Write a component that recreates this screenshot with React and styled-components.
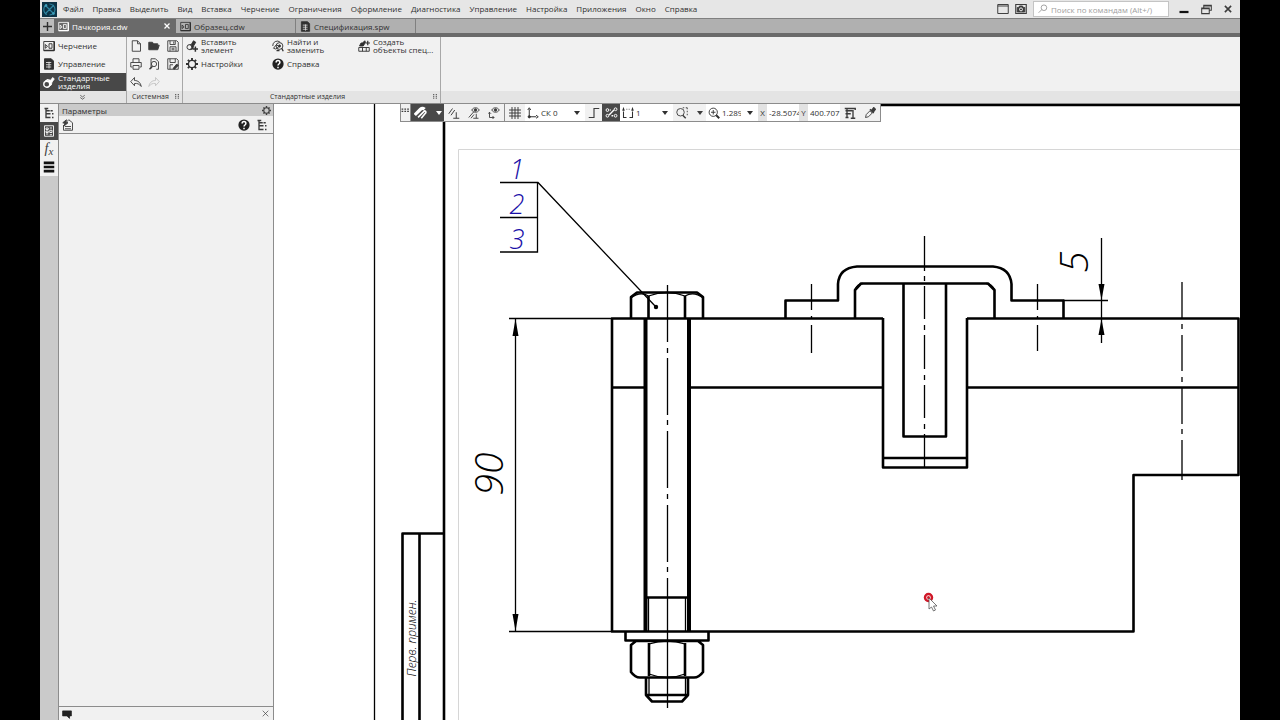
import React, { useState } from 'react'
import styled, { createGlobalStyle } from 'styled-components'

const GlobalStyle = createGlobalStyle`
    * {
        box-sizing: border-box;
    }
    body {
        margin: 0;
        background: #000;
        font-family: "Open Sans", "Noto Sans", sans-serif;
        font-size: 8px;
        color: #303030;
    }
    button, input, select {
        font: inherit;
        color: inherit;
        border: 0;
        padding: 0;
        margin: 0;
        background: none;
        border-radius: 0;
        outline: none;
    }
`

const Window = styled.div`
    display: flex;
    flex-direction: column;
    height: 100vh;
    margin: 0 40px;
    background: #f1f1f1;
    overflow: hidden;
`

const MenuBar = styled.header`
    display: flex;
    align-items: center;
    flex: none;
    height: 19px;
    padding: 0 6px 0 2px;
    background: #e6e6e6;
    border-bottom: 1px solid #808080;
`

const Menu = styled.nav`
    display: flex;
    flex: 1;
    gap: 9px;
    margin-left: 6px;
`

const MenuItem = styled.button`
    line-height: 18px;
    white-space: nowrap;
`

const WindowTools = styled.div`
    display: flex;
    align-items: center;
    gap: 6px;
`

const Search = styled.label`
    display: flex;
    align-items: center;
    gap: 3px;
    width: 136px;
    height: 16px;
    padding: 0 4px;
    background: #fff;
    border: 1px solid #c4c4c4;
    color: #888;
`

const SearchInput = styled.input`
    flex: 1;
    min-width: 0;
    &::placeholder {
        color: #a0a0a0;
        opacity: 1;
    }
`

const WindowButtons = styled.div`
    display: flex;
    gap: 10px;
    margin-left: 3px;
`

const IconButton = styled.button`
    display: flex;
    align-items: center;
    justify-content: center;
    flex: none;
    width: ${(props) => props.$width || 12}px;
    height: ${(props) => props.$height || 12}px;
    color: ${(props) => (props.$active ? '#fff' : '#3c3c3c')};
    background: ${(props) => (props.$active ? '#484848' : 'transparent')};
    opacity: ${(props) => (props.disabled ? 0.25 : 1)};
`

const TabBar = styled.div`
    display: flex;
    flex: none;
    height: 18px;
    background: #b0b0b0;
    border-bottom: 4px solid #6a6a6a;
`

const NewTab = styled.button`
    display: flex;
    align-items: center;
    justify-content: center;
    width: 14px;
    height: 14px;
    background: #bcbcbc;
`

const Tab = styled.button`
    display: flex;
    align-items: center;
    gap: 3px;
    width: ${(props) => (props.$active ? 122 : 120)}px;
    height: 14px;
    padding: 0 4px;
    color: ${(props) => (props.$active ? '#fff' : '#303030')};
    background: ${(props) => (props.$active ? '#6a6a6a' : '#b0b0b0')};
    border-right: 1px solid ${(props) => (props.$active ? '#6a6a6a' : '#808080')};
    text-align: left;
`

const TabTitle = styled.span`
    flex: 1;
`

const Ribbon = styled.div`
    display: flex;
    flex: none;
    height: 67px;
    background: #f1f1f1;
    border-bottom: 1px solid #8c8c8c;
`

const Group = styled.section`
    display: flex;
    flex-direction: column;
    flex: ${(props) => (props.$width ? 'none' : 1)};
    width: ${(props) => (props.$width ? props.$width + 'px' : 'auto')};
    border-right: ${(props) => (props.$width ? '1px solid #a8a8a8' : '0')};
`

const GroupBody = styled.div`
    display: grid;
    flex: 1;
    grid-template-columns: ${(props) => props.$columns || '1fr'};
    grid-auto-rows: 18px;
    padding: 0 ${(props) => props.$pad || 0}px;
    justify-items: ${(props) => (props.$center ? 'center' : 'stretch')};
    align-items: center;
`

const GroupFooter = styled.footer`
    display: flex;
    align-items: center;
    justify-content: center;
    height: 12px;
    padding-right: 2px;
    background: #e4e4e4;
    font-size: 7px;
    line-height: 12px;
`

const GroupTitle = styled.span`
    flex: 1;
    text-align: center;
`

const Command = styled.button`
    display: flex;
    align-items: center;
    gap: 3px;
    height: 18px;
    padding-left: ${(props) => props.$pad || 0}px;
    line-height: 8px;
    text-align: left;
    white-space: pre;
    color: ${(props) => (props.$active ? '#fff' : '#303030')};
    background: ${(props) => (props.$active ? '#484848' : 'transparent')};
`

const Workspace = styled.main`
    display: flex;
    flex: 1;
    min-height: 0;
`

const SideStrip = styled.div`
    display: flex;
    flex-direction: column;
    flex: none;
    width: 19px;
    background: #cacaca;
    border-right: 1px solid #8c8c8c;
`

const SideButton = styled(IconButton)`
    width: 18px;
    height: 18px;
    background: ${(props) => (props.$active ? '#484848' : '#f1f1f1')};
`

const Panel = styled.aside`
    display: flex;
    flex-direction: column;
    flex: none;
    width: 215px;
    border-right: 1px solid #8c8c8c;
`

const PanelHeader = styled.div`
    display: flex;
    align-items: center;
    justify-content: space-between;
    height: 12px;
    padding: 0 1px 0 3px;
    line-height: 11px;
    background: #cacaca;
`

const PanelTools = styled.div`
    display: flex;
    align-items: center;
    gap: 6px;
    height: 18px;
    padding: 0 5px 0 3px;
    border-bottom: 1px solid #8c8c8c;
`

const PanelBody = styled.div`
    flex: 1;
`

const PanelFooter = styled.div`
    display: flex;
    align-items: center;
    justify-content: space-between;
    height: 14px;
    padding: 0 2px;
    border-top: 1px solid #8c8c8c;
`

const Spacer = styled.span`
    flex: 1;
`

const Canvas = styled.div`
    position: relative;
    flex: 1;
    min-width: 0;
    background: #fff;
`

const Sheet = styled.svg`
    display: block;
    width: 100%;
    height: 100%;
`

const ViewBar = styled.div`
    position: absolute;
    top: 0;
    left: 126px;
    display: flex;
    height: 18px;
    background: #fff;
    border: 1px solid #8c8c8c;
    border-top: 0;
`

const Segment = styled.div`
    display: flex;
    align-items: center;
    justify-content: space-around;
    flex: none;
    width: ${(props) => props.$width}px;
    background: ${(props) => (props.$dark ? '#484848' : '#f1f1f1')};
    color: ${(props) => (props.$dark ? '#fff' : '#3c3c3c')};
    border-right: ${(props) => (props.$line ? '1px solid #8c8c8c' : '0')};
`

const Drop = styled.label`
    display: flex;
    align-items: center;
    gap: 2px;
    width: ${(props) => props.$width}px;
    padding: 0 5px 0 2px;
`

const DropSelect = styled.select`
    appearance: none;
    flex: 1;
    min-width: 0;
    overflow: hidden;
`

const Caret = styled.span`
    flex: none;
    width: 0;
    height: 0;
    margin-left: 4px;
    border: 3px solid transparent;
    border-top: 4px solid currentColor;
    border-bottom: 0;
`

const Coordinate = styled.label`
    display: flex;
    align-items: center;
    gap: 2px;
`

const Axis = styled.span`
    width: 9px;
    line-height: 17px;
    text-align: center;
    background: #e2e2e2;
`

const CoordinateInput = styled.input`
    width: 30px;
`

const glyphs = {
    sheet: <><path d="M1 2h14v12H1zM8 5v6M12 5v6M8 5h4M8 11h4M3 6l3 2.500-3 2.500z" /><path d="M1 14h14M15 2v12" strokeWidth="2" /></>,
    doc: <><path d="M2 1h9l3 3v11H2z" fill="currentColor" /><path d="M4 6h7M4 9h7M4 12h7M8 5v9" stroke="#ddd" /></>,
    bolt: <><path d="M5 7l5-1 3-4 2 2-3 4-1 4-5 3z" fill="currentColor" /><circle cx="5" cy="11" r="4" fill="#484848" strokeWidth="1.800" /><path d="M3 7l3-2 4 1" strokeWidth="2" /></>,
    file: <path d="M3 1h7l4 4v10H3zM10 1v4h4" />,
    folder: <path d="M1 13V3h5l1.500 2H13v2h2l-2 6z" fill="currentColor" />,
    save: <><path d="M1 1h12l2 2v12H1zM4 1v5h7V1M4 15V9h8v6" /><path d="M9 2v3M6 11h4M6 13h4" /></>,
    print: <path d="M4 6V1h8v5M3 12H1V6h14v6h-2M4 10h8v5H4z" />,
    preview: <><path d="M4 14V1h6l4 4v10h-3" /><circle cx="8" cy="8" r="3.500" /><path d="M6 11l-4 4" strokeWidth="2" /></>,
    saveAs: <><path d="M1 1h12l2 2v12H1zM4 1v5h7V1M4 15V9h4" /><path d="M8 14l5-6 2 2-5 5z" fill="currentColor" /></>,
    undo: <path d="M6 2L1 7.500 6 13V10c4-.5 6 .5 9 4-1-5-4-8-9-8z" />,
    redo: <path d="M10 2l5 5.500L10 13V10c-4-.5-6 .5-9 4 1-5 4-8 9-8z" />,
    insert: <><path d="M3 7l4-1 3-5 3 2-3 5-1 4-4 1z" fill="currentColor" /><circle cx="4.500" cy="9.500" r="3.200" fill="#f1f1f1" /><path d="M9 12h7M12.500 8.500v7" strokeWidth="2" /></>,
    gear: <><circle cx="8" cy="8" r="4.800" strokeWidth="1.800" /><path d="M8 0v3M8 13v3M0 8h3M13 8h3M2.500 2.500l2 2M11.500 11.500l2 2M2.500 13.500l2-2M11.500 4.500l2-2" strokeWidth="2.500" /></>,
    replace: <><path d="M1 8a6 6 0 0 1 10-5M2 11l4-5 3 3-4 3z" /><circle cx="10" cy="8" r="4.500" /><path d="M8 8h4M10 6v4M6 14h4M13 11l2 4" strokeWidth="1.700" /></>,
    help: <><circle cx="8" cy="8" r="7.500" fill="#222" stroke="none" /><path d="M5.500 6c0-3.500 5-3.500 5 0 0 2-2.500 2-2.500 4M8 11.500v2" stroke="#fff" strokeWidth="2" /></>,
    create: <><path d="M2 8l2-4 2 0 3-3 1 2-3 5H3z" fill="currentColor" /><path d="M10 4h6M13 1v6" strokeWidth="1.600" /><path d="M1 10h14v5H1zM6 10v5M11 10v5" /></>,
    tree: <path d="M4 1v13h6M2 2h5M4 5h5M4 9h6M10 5h3M12 9h2M12 14h2" strokeWidth="1.800" />,
    params: <><path d="M2 1h12v14H2z" /><path d="M4 4h3v2H4zM4 8h3v2H4zM4 12h3M9 4h3M9 7h3v3H9zM9 13h3" /></>,
    layers: <path d="M1 2.500h14M1 8h14M1 13.500h14" strokeWidth="3.500" stroke="#111" />,
    apply: <><path d="M6 4l3-3 5 4v10H2V8M4 10h8M4 13h8" /><path d="M6 1L1 5l3 1-2 4 6-5-3-1z" fill="currentColor" /></>,
    message: <path d="M1 3h14v8h-3v4l-4-4H1z" fill="#222" stroke="#222" />,
    close: <path d="M3 3l10 10M13 3L3 13" strokeWidth="2.500" />,
    thinClose: <path d="M3 3l10 10M13 3L3 13" />,
    minimize: <path d="M2 12h12" strokeWidth="3" stroke="#111" />,
    restore: <path d="M4 6V2h11v7h-3M1 6h11v8H1zM1 7h11M4 3h11" strokeWidth="1.500" />,
    screen: <path d="M1 2h14v12H1zM1 4h14" strokeWidth="1.300" />,
    camera: <><path d="M1 2h14v12H1z" strokeWidth="1.500" /><path d="M3 6h2l1-2h4l1 2h2v6H3z" fill="currentColor" /><circle cx="8" cy="8.500" r="2" stroke="#fff" /></>,
    search: <><circle cx="9.500" cy="6" r="4.500" /><path d="M6 9l-5 5" /></>,
    plus: <path d="M8 0v16M0 8h16" strokeWidth="2.500" />,
    more: <path d="M4 4l4 3 4-3M4 8l4 3 4-3" />,
    grip: <path d="M3 1h3M10 1h3M3 6h3M10 6h3M3 11h3M10 11h3" strokeWidth="2.500" />,
    dots: <path d="M1 2h3M6 2h3M11 2h3M1 6h3M6 6h3M11 6h3" strokeWidth="2" />,
    clip: <><path d="M1 11l7-7c2-2 4-1 5 0" strokeWidth="4" /><path d="M5 14l8-8c2 0 2 2 1 3l-5 6" strokeWidth="2" /></>,
    perp: <path d="M1 9l5-7M4 11l5-7M7 15h8M11 7v8" strokeWidth="1.300" />,
    eyePerp: <><path d="M1 14l7-8M4 15l4-5M7 15h7M11 9v6" /><path d="M5 4c2-4 8-4 10 0-2 4-8 4-10 0z" /><circle cx="10" cy="4" r="1.700" fill="currentColor" /></>,
    eyeAxis: <><path d="M2 7v7h6M0 9l2-2 2 2M6 12l2 2-2 2" /><path d="M5 4c2-4 8-4 10 0-2 4-8 4-10 0z" /><circle cx="10" cy="4" r="1.700" fill="currentColor" /></>,
    grid: <path d="M4 0v16M8 0v16M12 0v16M0 4h16M0 8h16M0 12h16" strokeWidth="1.300" />,
    axes: <><path d="M3 3v10h9M1 4l2-3 2 3M12 11l3 2-3 2" strokeWidth="1.300" /><circle cx="3" cy="13" r="1.500" fill="currentColor" /></>,
    step: <path d="M1 14h7V2h7" strokeWidth="1.500" />,
    snap: <><circle cx="3" cy="5" r="1.700" /><circle cx="13" cy="4" r="1.700" /><circle cx="3" cy="12" r="1.700" /><circle cx="13" cy="12" r="1.700" /><path d="M5 11l6-6M6 5h1M8 12h2" strokeWidth="1.700" /></>,
    pitch: <path d="M2 6v8h4M1 5l1-3 1 3M10 14h4V6M13 5l1-3 1 3M6 3h1M9 3h1" strokeWidth="1.400" />,
    zoomArea: <><circle cx="6" cy="7" r="5" /><path d="M9 11l4 4" strokeWidth="2" /><path d="M9 1h2M13 1h2v2M15 5v2M15 9v2" /></>,
    zoomIn: <><circle cx="7" cy="7" r="5.500" /><path d="M4 7h6M7 4v6" /><path d="M11 11l4 4" strokeWidth="2.500" /></>,
    round: <path d="M1 2h14M2 5h9M2 9h7M2 14h4M4 2v12M12 4v11M15 1v3M9 15h6" strokeWidth="1.800" />,
    dropper: <><path d="M2 14l1-4 5-5 3 3-5 5z" /><path d="M8 3l5 5M10 5l3-4 2 2-3 4z" fill="currentColor" strokeWidth="2" /></>
}

function Icon ({ name, size = 12 }) {
    return (
        <svg width={size} height={size} viewBox="0 0 16 16" fill="none" stroke="currentColor" strokeWidth="1.200" style={{ flex: 'none' }} aria-hidden="true">
            {glyphs[name]}
        </svg>
    )
}

function Logo () {
    return (
        <svg width="15" height="15" viewBox="0 0 15 15" fill="none" aria-hidden="true">
            <rect width="15" height="15" fill="#0d3346" />
            <path d="M3 3l9 9M12 3l-9 9M7.500 2a5.500 5.500 0 0 1 0 11M5 2.500a5.500 5.500 0 0 0 0 10" stroke="#2f87a3" strokeWidth="1.100" />
            <circle cx="4" cy="3.500" r="1.300" fill="#3fa0bd" />
            <circle cx="11.500" cy="11.500" r="1.300" fill="#3fa0bd" />
        </svg>
    )
}

const menu = ['Файл', 'Правка', 'Выделить', 'Вид', 'Вставка', 'Черчение', 'Ограничения', 'Оформление', 'Диагностика', 'Управление', 'Настройка', 'Приложения', 'Окно', 'Справка']

const tabs = [
    { title: 'Пачкория.cdw', icon: 'sheet' },
    { title: 'Образец.cdw', icon: 'sheet' },
    { title: 'Спецификация.spw', icon: 'doc' }
]

const modes = [
    { title: 'Черчение', icon: 'sheet' },
    { title: 'Управление', icon: 'doc' },
    { title: 'Стандартные\nизделия', icon: 'bolt' }
]

const system = [
    ['file', 'Создать'], ['folder', 'Открыть'], ['save', 'Сохранить'],
    ['print', 'Печать'], ['preview', 'Просмотр'], ['saveAs', 'Сохранить как'],
    ['undo', 'Отменить'], ['redo', 'Повторить']
]

const commands = [
    { title: 'Вставить\nэлемент', icon: 'insert' },
    { title: 'Найти и\nзаменить', icon: 'replace' },
    { title: 'Создать\nобъекты спец...', icon: 'create' },
    { title: 'Настройки', icon: 'gear' },
    { title: 'Справка', icon: 'help' }
]

const Fx = styled.span`
    font: italic 14px "Liberation Serif", serif;
    & small {
        font-size: 11px;
        vertical-align: -2px;
    }
`

const Thick = styled.path`
    fill: none;
    stroke: #000;
    stroke-width: 2.6;
    stroke-linejoin: round;
`

const Thin = styled.path`
    fill: none;
    stroke: #000;
    stroke-width: 1.3;
`

const Mark = styled.text`
    font-family: "Open Sans", "Noto Sans", sans-serif;
    font-style: italic;
    font-weight: 300;
    font-size: ${(props) => props.$size}px;
    fill: ${(props) => props.$color || '#000'};
    text-anchor: middle;
`

function Drawing () {
    return (
        <Sheet viewBox="274 104 966 616" preserveAspectRatio="xMinYMin slice" role="img" aria-label="Чертёж">
            {/* sheet frame and margin table */}
            <path d="M458.500 720V149.500H1240" fill="none" stroke="#d6d6d6" />
            <Thin d="M374.500 104V720" />
            <Thick d="M444 104V720M444 105H1240M402.500 720V533.500H444M419.500 533.500V720" />
            <Mark $size={12} transform="translate(416 638) rotate(-90)">Перв. примен.</Mark>

            {/* position callout */}
            <Thin d="M500 182.500H538L656 307M500 217.500H537.500M500 252H537.500V182.500" />
            <circle cx="656" cy="307" r="2.200" />
            <Mark $size={27} $color="#1a10a8" x="517" y="179">1</Mark>
            <Mark $size={27} $color="#1a10a8" x="517" y="214">2</Mark>
            <Mark $size={27} $color="#1a10a8" x="517" y="249">3</Mark>

            {/* plates */}
            <Thick d="M883 318.500H612V631.500H1133.500V475H1238.500V318.500H967M612 387.500H645M689 387.500H883M967 387.500H1238.500" />

            {/* bolt, washer, nut */}
            <path d="M645.500 318V631M689 318V631" stroke="#000" strokeWidth="4" />
            <Thick d="M631 318V297L637 292.500H697L703 297V318M648.500 296V318M685 296V318M646 597.500H688" />
            <Thin d="M631 298Q640 291 648.500 296Q667 289 685 296Q694 291 703 298M648.500 597V631M685.500 597V631" />
            <Thick d="M625.500 631.500V640.500H708.500V631.500M636 641H698L703 645V672Q699 677.500 694 677.500H640Q635 677.500 631 672V645ZM649 643V676M685 643V676" />
            <Thick d="M646 677.500V695L652 701.500H682L688 695V677.500M646 695H688" />
            <Thin d="M649 644Q667 638 685 644M649 674Q667 681 685 674M649 678V695M685.500 678V695" />
            <Thin d="M667.500 285V342M667.500 348V353M667.500 358V415M667.500 420V425M667.500 431V488M667.500 494V499M667.500 505V562M667.500 567V572M667.500 578V708" />

            {/* bracket and peg */}
            <Thick d="M785.500 318V300.500H838V284Q839 268 857 266.500H993Q1010 268 1011.500 284V300.500H1063.500V318" />
            <Thick d="M855 318V290L861 283.500H988L994.500 290V318M903.500 284V436.500H946V284M883 318V467.500H967V318M883 458H967" />
            <Thin d="M855 290Q857 284 863 283.500M994.500 290Q992 284 986 283.500" />
            <Thin d="M924.500 236V271M924.500 276V281M924.500 286V319M924.500 325V330M924.500 335V369M924.500 375V380M924.500 385V418M924.500 424V429M924.500 434V467" />
            <Thin d="M811.500 284V310M811.500 316V319M811.500 325V353M1037.500 284V310M1037.500 316V319M1037.500 325V351" />
            <Thin d="M1182 282V318M1182 324V329M1182 335V371M1182 377V382M1182 387V424M1182 429V434M1182 440V480" />

            {/* dimensions */}
            <Thin d="M509 318.500H612M509 631.500H612M515.500 319V631M1063 300.500H1108M1101.500 238V343" />
            <path d="M515.500 319l-3 17h6zM515.500 631l-3-17h6zM1101.500 300l-3-16h6zM1101.500 319l-3 16h6z" />
            <Mark $size={39} transform="translate(503 474) rotate(-90)">90</Mark>
            <Mark $size={39} transform="translate(1088 262) rotate(-90)">5</Mark>

            {/* pointer */}
            <circle cx="928.500" cy="597.500" r="3.500" fill="#fff" stroke="#d01828" strokeWidth="2.500" />
            <circle cx="928.500" cy="597.500" r="1.500" fill="#d01828" />
            <path d="M929 598v11l2.500-2 2 4 2-1-2-4h3.500z" fill="#fff" stroke="#555" strokeWidth=".8" />
        </Sheet>
    )
}

function ViewTools () {
    return (
        <ViewBar>
            <Segment $width={10} $line><Icon name="dots" size={9} /></Segment>
            <Segment $width={33} $dark>
                <IconButton $active $width={14} aria-label="Привязки"><Icon name="clip" size={13} /></IconButton>
                <Caret />
            </Segment>
            <Segment $width={61} $line>
                <IconButton aria-label="Перпендикуляр"><Icon name="perp" /></IconButton>
                <IconButton aria-label="Показать ограничения"><Icon name="eyePerp" /></IconButton>
                <IconButton aria-label="Показать степени свободы"><Icon name="eyeAxis" /></IconButton>
            </Segment>
            <Segment $width={20}>
                <IconButton aria-label="Сетка"><Icon name="grid" /></IconButton>
            </Segment>
            <Drop $width={60}>
                <Icon name="axes" />
                <DropSelect aria-label="Система координат"><option>СК 0</option></DropSelect>
                <Caret />
            </Drop>
            <Segment $width={17}>
                <IconButton aria-label="Ортогональное черчение"><Icon name="step" /></IconButton>
            </Segment>
            <Segment $width={18} $dark>
                <IconButton $active aria-label="Дополнительные привязки"><Icon name="snap" size={13} /></IconButton>
            </Segment>
            <Drop $width={53}>
                <Icon name="pitch" />
                <DropSelect aria-label="Шаг курсора"><option>1</option></DropSelect>
                <Caret />
            </Drop>
            <Segment $width={33}>
                <IconButton aria-label="Показать рамкой"><Icon name="zoomArea" /></IconButton>
                <Caret />
            </Segment>
            <Drop $width={52}>
                <Icon name="zoomIn" />
                <DropSelect aria-label="Масштаб"><option>1.2891</option></DropSelect>
                <Caret />
            </Drop>
            <Coordinate><Axis>X</Axis><CoordinateInput defaultValue="-28.5074" /></Coordinate>
            <Coordinate><Axis>Y</Axis><CoordinateInput defaultValue="400.7071" /></Coordinate>
            <Segment $width={40}>
                <IconButton aria-label="Округление"><Icon name="round" /></IconButton>
                <IconButton aria-label="Копировать свойства"><Icon name="dropper" /></IconButton>
            </Segment>
        </ViewBar>
    )
}

function App () {
    const [currTab, setCurrTab] = useState(tabs[0])
    const [currMode, setCurrMode] = useState(modes[2])

    return (
        <Window>
            <GlobalStyle />
            <MenuBar>
                <Logo />
                <Menu>
                    {menu.map((item) => <MenuItem key={item}>{item}</MenuItem>)}
                </Menu>
                <WindowTools>
                    <IconButton aria-label="Окна"><Icon name="screen" /></IconButton>
                    <IconButton aria-label="Вид экрана"><Icon name="camera" /></IconButton>
                    <Search>
                        <Icon name="search" size={10} />
                        <SearchInput placeholder="Поиск по командам (Alt+/)" aria-label="Поиск по командам" />
                    </Search>
                    <WindowButtons>
                        <IconButton aria-label="Свернуть"><Icon name="minimize" /></IconButton>
                        <IconButton aria-label="Восстановить"><Icon name="restore" size={11} /></IconButton>
                        <IconButton aria-label="Закрыть"><Icon name="close" size={10} /></IconButton>
                    </WindowButtons>
                </WindowTools>
            </MenuBar>

            <TabBar>
                <NewTab aria-label="Новая вкладка"><Icon name="plus" size={9} /></NewTab>
                {tabs.map((tab) => (
                    <Tab key={tab.title} $active={tab === currTab} onClick={() => setCurrTab(tab)}>
                        <Icon name={tab.icon} size={11} />
                        <TabTitle>{tab.title}</TabTitle>
                        {tab === currTab && <Icon name="close" size={8} />}
                    </Tab>
                ))}
            </TabBar>

            <Ribbon>
                <Group $width={87}>
                    <GroupBody>
                        {modes.map((mode) => (
                            <Command key={mode.title} $pad={3} $active={mode === currMode} onClick={() => setCurrMode(mode)}>
                                <Icon name={mode.icon} />
                                {mode.title}
                            </Command>
                        ))}
                    </GroupBody>
                    <GroupFooter><Icon name="more" size={9} /></GroupFooter>
                </Group>
                <Group $width={56}>
                    <GroupBody $columns="repeat(3, 1fr)" $center>
                        {system.map(([icon, title]) => (
                            <IconButton key={icon} aria-label={title} disabled={icon === 'redo'}><Icon name={icon} /></IconButton>
                        ))}
                    </GroupBody>
                    <GroupFooter><GroupTitle>Системная</GroupTitle><Icon name="grip" size={6} /></GroupFooter>
                </Group>
                <Group $width={258}>
                    <GroupBody $columns="repeat(3, 86px)" $pad={3}>
                        {commands.map((command) => (
                            <Command key={command.title}>
                                <Icon name={command.icon} />
                                {command.title}
                            </Command>
                        ))}
                    </GroupBody>
                    <GroupFooter><GroupTitle>Стандартные изделия</GroupTitle><Icon name="grip" size={6} /></GroupFooter>
                </Group>
                <Group>
                    <GroupBody />
                    <GroupFooter />
                </Group>
            </Ribbon>

            <Workspace>
                <SideStrip>
                    <SideButton aria-label="Дерево"><Icon name="tree" /></SideButton>
                    <SideButton $active aria-label="Параметры"><Icon name="params" /></SideButton>
                    <SideButton aria-label="Переменные"><Fx>f<small>x</small></Fx></SideButton>
                    <SideButton aria-label="Слои"><Icon name="layers" /></SideButton>
                </SideStrip>
                <Panel>
                    <PanelHeader>
                        Параметры
                        <IconButton aria-label="Настройка панели"><Icon name="gear" size={9} /></IconButton>
                    </PanelHeader>
                    <PanelTools>
                        <IconButton aria-label="Применить"><Icon name="apply" /></IconButton>
                        <Spacer />
                        <IconButton aria-label="Справка"><Icon name="help" /></IconButton>
                        <IconButton aria-label="Структура"><Icon name="tree" /></IconButton>
                    </PanelTools>
                    <PanelBody />
                    <PanelFooter>
                        <IconButton aria-label="Сообщения"><Icon name="message" size={10} /></IconButton>
                        <IconButton aria-label="Закрыть панель"><Icon name="thinClose" size={9} /></IconButton>
                    </PanelFooter>
                </Panel>
                <Canvas>
                    <Drawing />
                    <ViewTools />
                </Canvas>
            </Workspace>
        </Window>
    )
}

export default App
